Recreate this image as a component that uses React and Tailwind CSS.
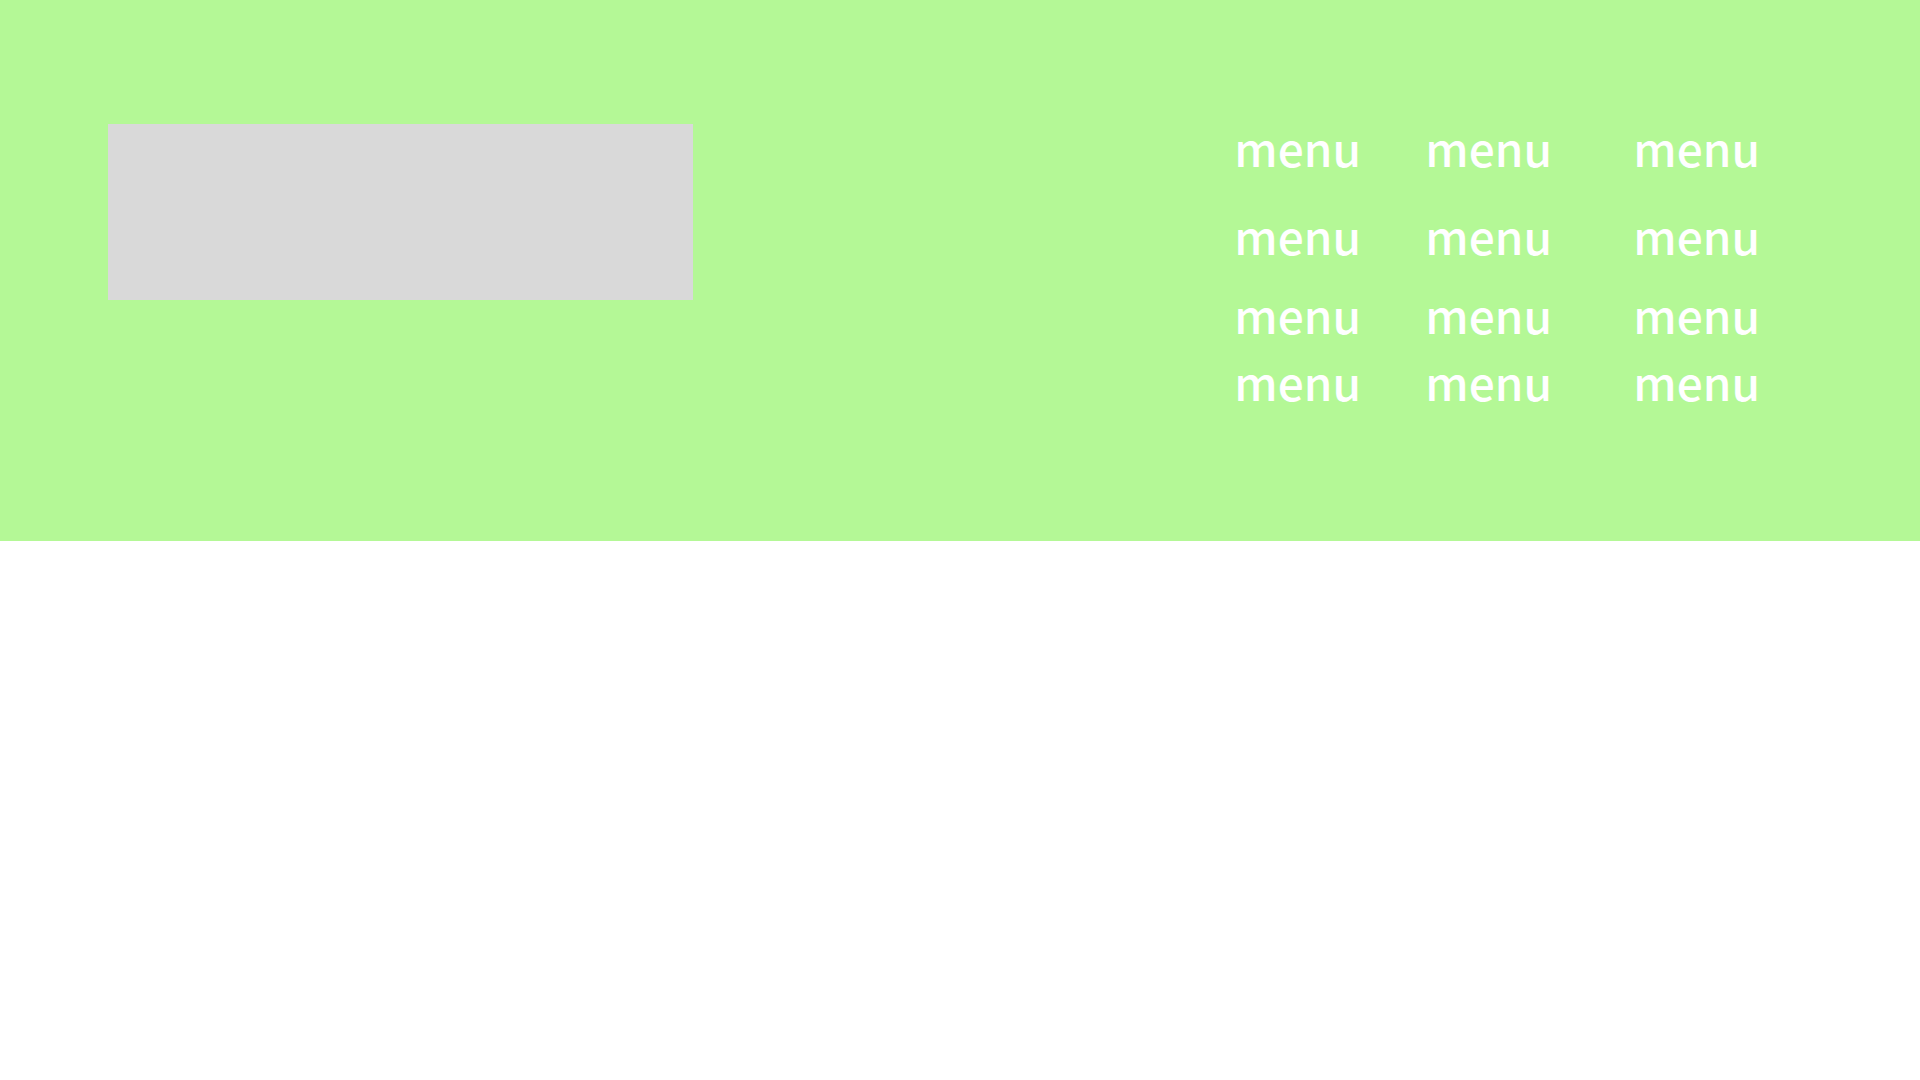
import React from "react";

const rows = [
  ["menu", "menu", "menu"],
  ["menu", "menu", "menu"],
  ["menu", "menu", "menu"],
  ["menu", "menu", "menu"],
];

// spacing above each row of the menu grid
const rowGap = ["mt-0", "mt-[42px]", "mt-[33px]", "mt-[21px]"];

const App = () => {
  return (
    <div className="min-h-screen bg-white">
      <header className="flex h-[541px] items-start justify-between bg-[#b4f896] pl-[108px] pr-[160px] pt-[124px] font-['Noto_Sans_CJK_JP',sans-serif]">
        {/* logo placeholder */}
        <div className="h-[176px] w-[585px] shrink-0 bg-[#d9d9d9]" />
        <nav className="flex flex-col text-[46px] font-medium leading-none text-white">
          {rows.map((row, i) => (
            <div key={i} className={"flex " + rowGap[i]}>
              <a className="w-[191px]">{row[0]}</a>
              <a className="w-[208px]">{row[1]}</a>
              <a>{row[2]}</a>
            </div>
          ))}
        </nav>
      </header>
    </div>
  );
};

export default App;
